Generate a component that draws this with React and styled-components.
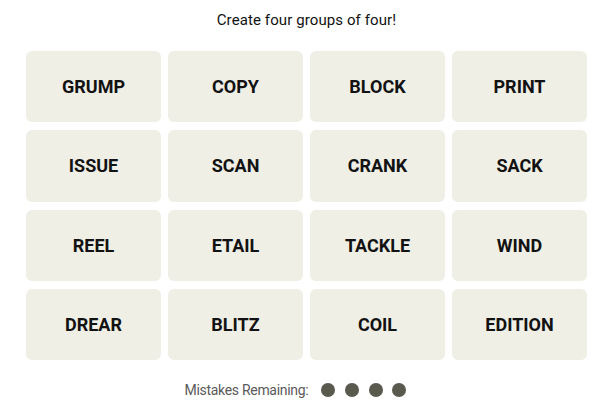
import React from "react";
import styled, { createGlobalStyle } from "styled-components";

const Global = createGlobalStyle`
  html, body { margin: 0; padding: 0; background: #fff; }
  body { font-family: "Roboto", "Liberation Sans", sans-serif; }
`;

const Page = styled.div`
  width: 606px;
  height: 410px;
  display: flex;
  flex-direction: column;
  align-items: center;
  box-sizing: border-box;
  padding-top: 11px;
  padding-left: 7px;
`;

const Title = styled.div`
  font-size: 15px;
  line-height: 18px;
  color: #121212;
  height: 18px;
  letter-spacing: 0.1px;
`;

const Grid = styled.div`
  margin-top: 22px;
  display: grid;
  grid-template-columns: repeat(4, 135px);
  grid-auto-rows: 71.3px;
  column-gap: 7px;
  row-gap: 8px;
`;

const Tile = styled.button`
  border: none;
  border-radius: 6px;
  background: #efefe6;
  color: #121212;
  font-family: "Roboto", "Liberation Sans", sans-serif;
  font-weight: 700;
  font-size: 18px;
  display: flex;
  align-items: center;
  justify-content: center;
  padding: 0;
  cursor: pointer;
`;

const Mistakes = styled.div`
  margin-top: 22px;
  margin-right: 22px;
  display: flex;
  align-items: center;
  gap: 13px;
  color: #5a5a5a;
  font-size: 14px;
  letter-spacing: -0.3px;
`;

const Dots = styled.div`
  display: flex;
  gap: 9.7px;
`;

const Dot = styled.span`
  width: 14px;
  height: 14px;
  border-radius: 50%;
  background: #5a594e;
`;

const words = [
  "GRUMP", "COPY", "BLOCK", "PRINT",
  "ISSUE", "SCAN", "CRANK", "SACK",
  "REEL", "ETAIL", "TACKLE", "WIND",
  "DREAR", "BLITZ", "COIL", "EDITION",
];

export default function App() {
  return (
    <>
      <Global />
      <Page>
        <Title>Create four groups of four!</Title>
        <Grid>
          {words.map((w) => (
            <Tile key={w}>{w}</Tile>
          ))}
        </Grid>
        <Mistakes>
          Mistakes Remaining:
          <Dots>
            {[0, 1, 2, 3].map((i) => (
              <Dot key={i} />
            ))}
          </Dots>
        </Mistakes>
      </Page>
    </>
  );
}
